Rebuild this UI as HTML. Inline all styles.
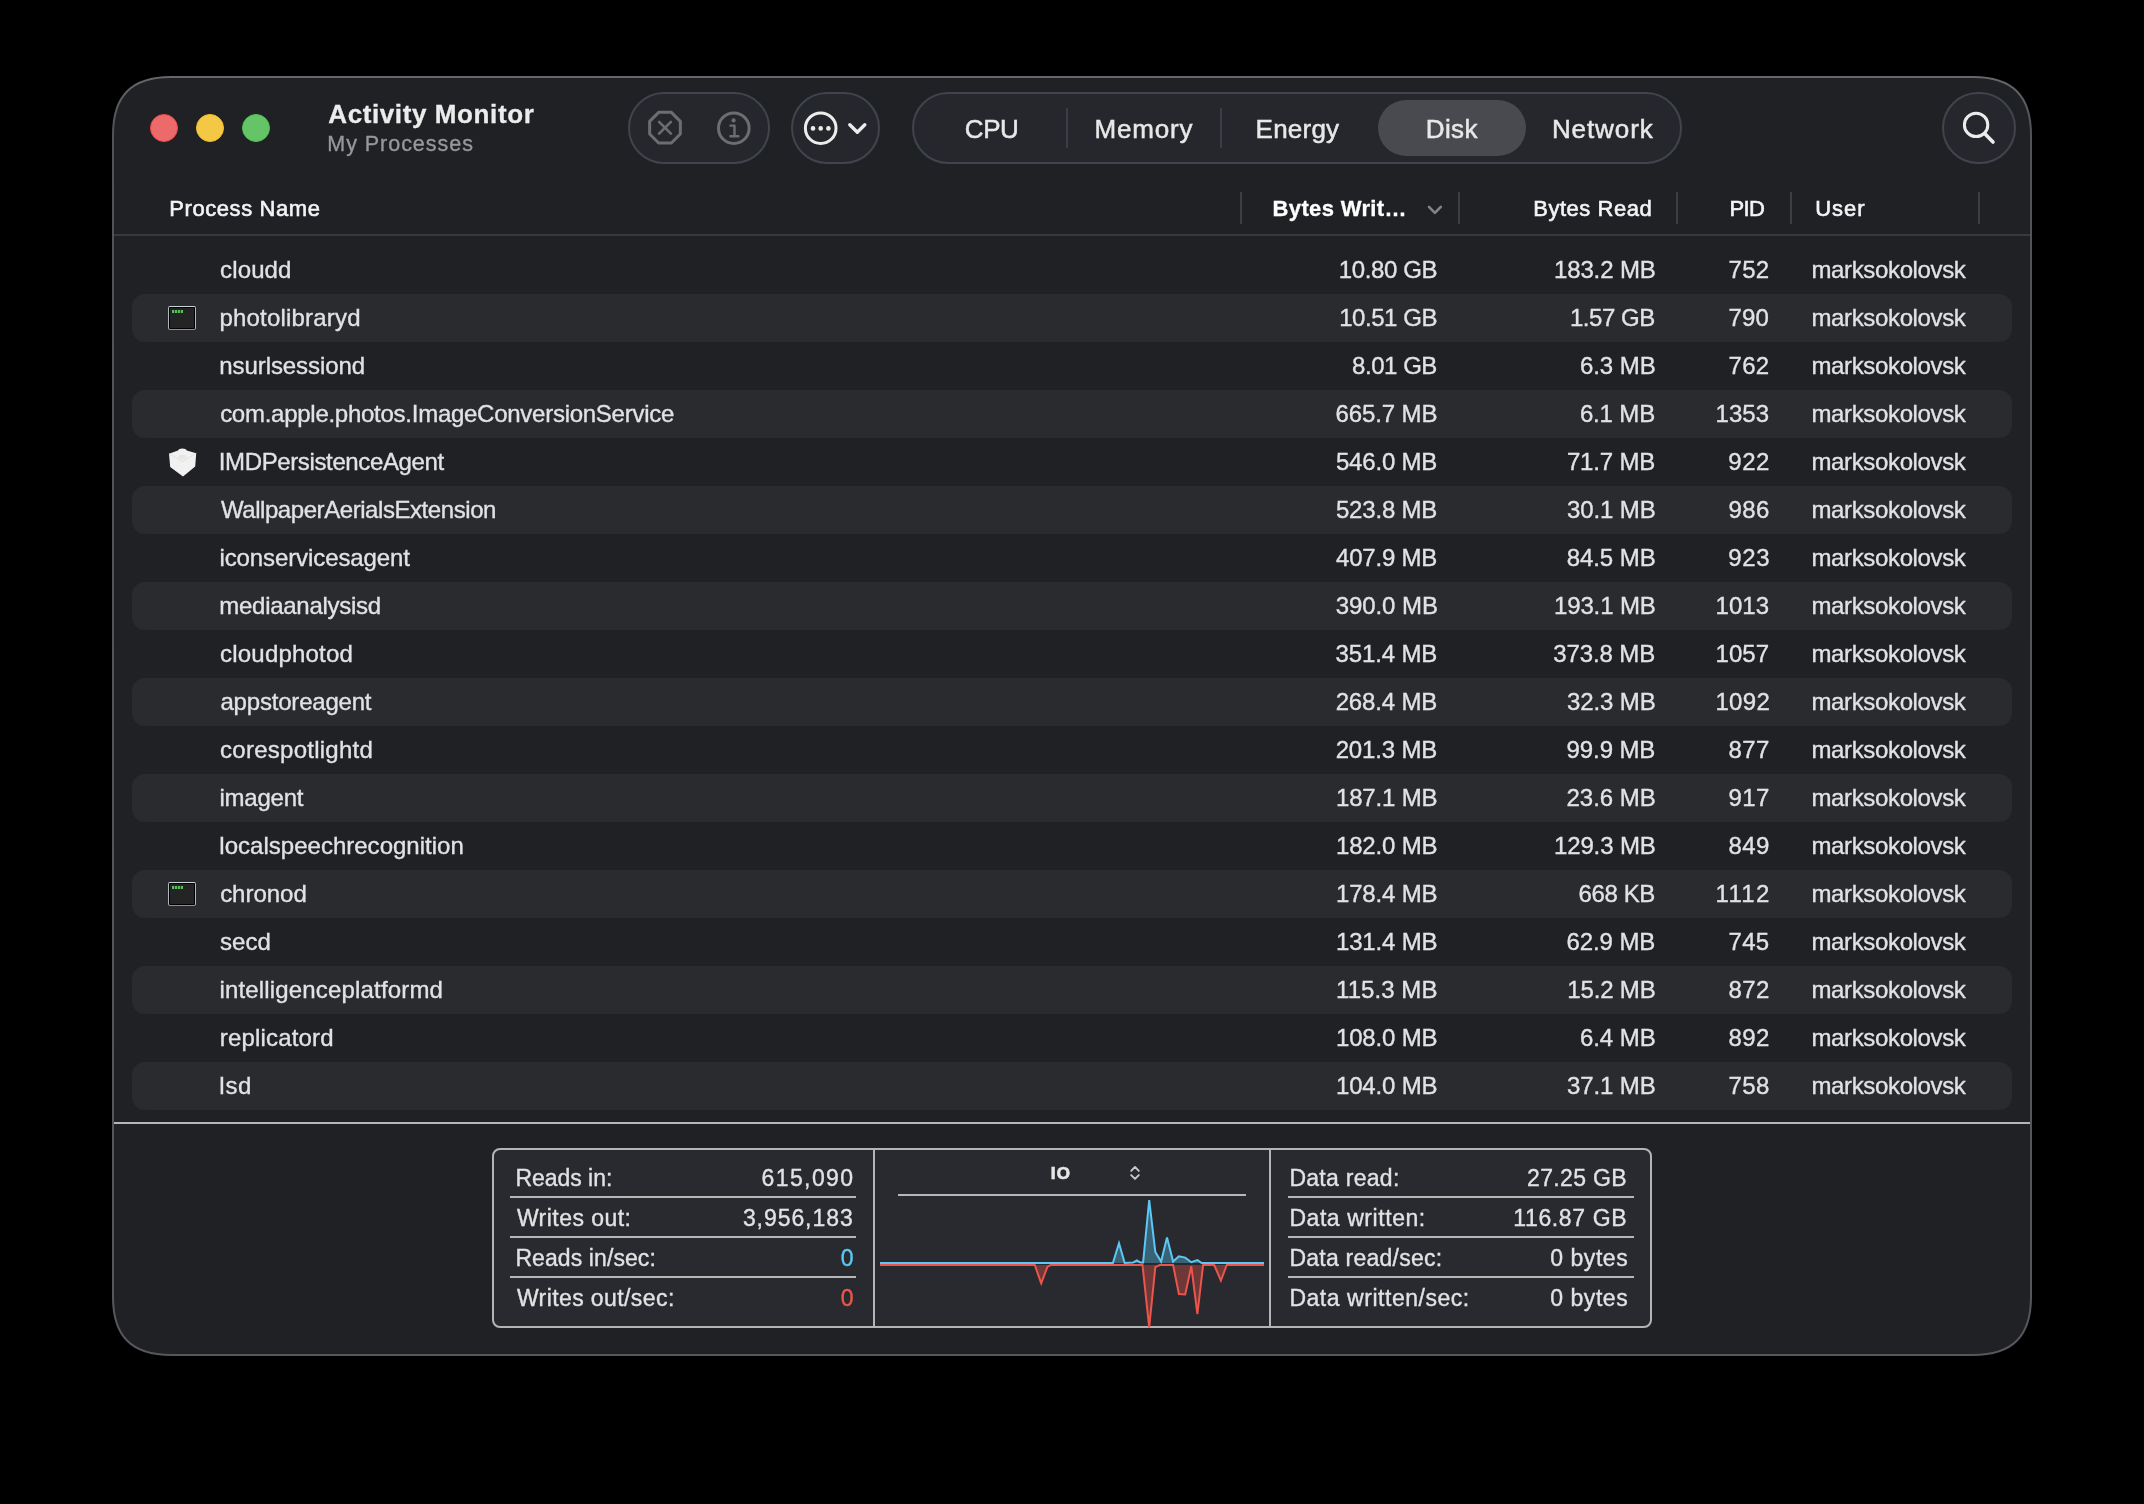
<!DOCTYPE html>
<html><head><meta charset="utf-8"><title>Activity Monitor</title>
<style>
html,body{margin:0;padding:0;background:#000;}
body{width:2144px;height:1504px;position:relative;overflow:hidden;font-family:"Liberation Sans",sans-serif;}
.abs,.t,svg{position:absolute;}
.t{white-space:pre;line-height:1;margin:0;padding:0;}
#win{left:112px;top:76px;width:1920px;height:1280px;box-sizing:border-box;border-radius:54px;background:#202125;border:2px solid #56575b;}
.alt{left:132px;width:1880px;height:48px;border-radius:13px;background:#2a2b2f;}
.pill{box-sizing:border-box;border:2px solid #40454d;background:#25272c;border-radius:36px;top:92px;height:72px;}
.vsep{width:2px;background:#3d3e42;top:192px;height:32px;}
.hl{height:2px;background:#b7b7b8;}

</style></head><body>
<svg class="abs" style="left:0;top:0" width="2144" height="1504" viewBox="0 0 2144 1504"><defs><linearGradient id="wg" gradientUnits="userSpaceOnUse" x1="0" y1="77" x2="0" y2="1355"><stop offset="0" stop-color="#66676b"/><stop offset="0.035" stop-color="#525357"/><stop offset="1" stop-color="#56575b"/></linearGradient></defs><path d="M171 77 L1973 77 C2012.44 77 2031 95.56 2031 135 L2031 1297 C2031 1336.44 2012.44 1355 1973 1355 L171 1355 C131.56 1355 113 1336.44 113 1297 L113 135 C113 95.56 131.56 77 171 77 Z" fill="#202125" stroke="url(#wg)" stroke-width="2"/></svg>
<div class="abs" style="left:150px;top:114px;width:28px;height:28px;border-radius:50%;background:#ec6a6a;box-sizing:border-box;border:1.5px solid #f0494b;"></div>
<div class="abs" style="left:196px;top:114px;width:28px;height:28px;border-radius:50%;background:#f2c845;box-sizing:border-box;border:1.5px solid #f5bf2a;"></div>
<div class="abs" style="left:242px;top:114px;width:28px;height:28px;border-radius:50%;background:#64c466;box-sizing:border-box;border:1.5px solid #4fc254;"></div>
<div class="abs pill" style="left:628px;width:142px;"></div>
<div class="abs pill" style="left:791px;width:89px;"></div>
<div class="abs pill" style="left:912px;width:770px;"></div>
<div class="abs pill" style="left:1942px;width:74px;height:72px;"></div>
<div class="abs" style="left:1378px;top:100px;width:148px;height:56px;border-radius:28px;background:#484a4f;"></div>
<div class="abs" style="left:1066px;top:108px;width:2px;height:40px;background:#3b3e44;"></div>
<div class="abs" style="left:1220px;top:108px;width:2px;height:40px;background:#3b3e44;"></div>
<svg class="abs" style="left:0;top:0" width="2144" height="1504" viewBox="0 0 2144 1504" fill="none">
<path d="M680.34 134.05 L671.35 143.04 L658.65 143.04 L649.66 134.05 L649.66 121.35 L658.65 112.36 L671.35 112.36 L680.34 121.35 Z" stroke="#6d6d71" stroke-width="3" stroke-linejoin="round"/>
<path d="M659.1 121.8 L670.9 133.6 M670.9 121.8 L659.1 133.6" stroke="#6d6d71" stroke-width="2.6" stroke-linecap="round"/>
<circle cx="733.8" cy="128.2" r="15.3" stroke="#6d6d71" stroke-width="3"/>
<circle cx="733.6" cy="120.4" r="2.1" fill="#6d6d71"/>
<path d="M730.4 125.6 L734.5 125.6 L734.5 136.3 M730.4 136.3 L738.4 136.3" stroke="#6d6d71" stroke-width="2.4" stroke-linecap="round" stroke-linejoin="round"/>
<circle cx="820.7" cy="128.2" r="15.3" stroke="#ececec" stroke-width="3"/>
<circle cx="813.0" cy="128.4" r="2.3" fill="#ececec"/>
<circle cx="820.7" cy="128.4" r="2.3" fill="#ececec"/>
<circle cx="828.4" cy="128.4" r="2.3" fill="#ececec"/>
<path d="M849.8 124.8 L857.3 132.2 L864.8 124.8" stroke="#ececec" stroke-width="3.4" stroke-linecap="round" stroke-linejoin="round"/>
<circle cx="1976.1" cy="124.9" r="11.7" stroke="#ececec" stroke-width="3"/>
<path d="M1984.6 133.6 L1993 142" stroke="#ececec" stroke-width="3.6" stroke-linecap="round"/>
<path d="M1429 206.9 L1434.9 212.8 L1440.8 206.9" stroke="#848488" stroke-width="2.6" stroke-linecap="round" stroke-linejoin="round"/>
</svg>
<div class="abs vsep" style="left:1240px;"></div>
<div class="abs vsep" style="left:1458px;"></div>
<div class="abs vsep" style="left:1676px;"></div>
<div class="abs vsep" style="left:1790px;"></div>
<div class="abs vsep" style="left:1978px;"></div>
<div class="abs" style="left:114px;top:234px;width:1916px;height:2px;background:#38393d;"></div>
<div class="abs alt" style="top:294px;"></div>
<div class="abs" style="left:168px;top:306px;width:28px;height:24px;box-sizing:border-box;border-radius:2px;border:1.5px solid;border-color:#c6d4d9 #aeb8bc #8f9091 #aeb8bc;background:#000;"><div class="abs" style="left:1px;top:1px;right:1px;bottom:1px;background:#242424;"></div><div class="abs" style="left:2.6px;top:3.4px;width:11px;height:3px;background:repeating-linear-gradient(90deg,#56c15b 0 2.1px,rgba(86,193,91,0.25) 2.1px 2.9px);"></div></div>
<div class="abs alt" style="top:390px;"></div>
<svg class="abs" style="left:160px;top:438px" width="48" height="48" viewBox="160 438 48 48"><path d="M169 453.8 L178 450.4 Q178.8 448.4 182.4 448.4 Q186 448.4 186.8 450.4 L196.2 453.2 L195.2 466.6 L183 476.4 L170.2 467 Z" fill="#f1f1f1"/><path d="M169 453.8 L182.6 461.5 L196.2 453.2" stroke="#e2e2e2" stroke-width="1" fill="none"/><ellipse cx="182.4" cy="457" rx="4.2" ry="2.2" fill="#e6e6e6"/></svg>
<div class="abs alt" style="top:486px;"></div>
<div class="abs alt" style="top:582px;"></div>
<div class="abs alt" style="top:678px;"></div>
<div class="abs alt" style="top:774px;"></div>
<div class="abs alt" style="top:870px;"></div>
<div class="abs" style="left:168px;top:882px;width:28px;height:24px;box-sizing:border-box;border-radius:2px;border:1.5px solid;border-color:#c6d4d9 #aeb8bc #8f9091 #aeb8bc;background:#000;"><div class="abs" style="left:1px;top:1px;right:1px;bottom:1px;background:#242424;"></div><div class="abs" style="left:2.6px;top:3.4px;width:11px;height:3px;background:repeating-linear-gradient(90deg,#56c15b 0 2.1px,rgba(86,193,91,0.25) 2.1px 2.9px);"></div></div>
<div class="abs alt" style="top:966px;"></div>
<div class="abs alt" style="top:1062px;"></div>
<div class="abs" style="left:114px;top:1122px;width:1916px;height:2px;background:#b6b6b7;"></div>
<div class="abs" style="left:492px;top:1148px;width:1160px;height:180px;box-sizing:border-box;border:2px solid #b4b4b5;border-radius:8px;background:#292a2f;"></div>
<div class="abs" style="left:873px;top:1149px;width:2px;height:178px;background:#b4b4b5;"></div>
<div class="abs" style="left:1269px;top:1149px;width:2px;height:178px;background:#b4b4b5;"></div>
<div class="abs hl" style="left:510px;top:1196px;width:346px;"></div>
<div class="abs hl" style="left:1288px;top:1196px;width:346px;"></div>
<div class="abs hl" style="left:510px;top:1236px;width:346px;"></div>
<div class="abs hl" style="left:1288px;top:1236px;width:346px;"></div>
<div class="abs hl" style="left:510px;top:1276px;width:346px;"></div>
<div class="abs hl" style="left:1288px;top:1276px;width:346px;"></div>
<div class="abs hl" style="left:898px;top:1194px;width:348px;"></div>
<svg class="abs" style="left:0;top:0" width="2144" height="1504" viewBox="0 0 2144 1504" fill="none">
<path d="M880.0 1265.0 L1034.8 1265.0 L1041.2 1283.4 L1047.5 1266.6 L1050.7 1265.0 L1142.5 1265.0 L1149.2 1327.4 L1155.3 1267.2 L1159.7 1265.0 L1173.1 1265.0 L1178.9 1294.0 L1185.2 1294.5 L1191.3 1266.2 L1197.4 1314.0 L1203.1 1265.0 L1214.2 1265.0 L1220.9 1280.6 L1226.7 1265.0 L1264.0 1265.0 Z" fill="#e8544a" fill-opacity="0.36"/>
<path d="M880.0 1263.0 L1112.9 1263.0 L1119.0 1243.3 L1124.7 1263.0 L1133.0 1262.6 L1136.8 1260.5 L1140.6 1262.6 L1143.1 1262.6 L1149.2 1200.2 L1155.3 1251.9 L1161.1 1261.6 L1167.0 1237.5 L1173.1 1261.6 L1178.9 1256.3 L1185.2 1257.6 L1191.3 1262.2 L1197.4 1260.1 L1201.8 1263.0 L1264.0 1263.0 Z" fill="#5ac8f5" fill-opacity="0.36"/>
<path d="M880.0 1265.0 L1034.8 1265.0 L1041.2 1283.4 L1047.5 1266.6 L1050.7 1265.0 L1142.5 1265.0 L1149.2 1327.4 L1155.3 1267.2 L1159.7 1265.0 L1173.1 1265.0 L1178.9 1294.0 L1185.2 1294.5 L1191.3 1266.2 L1197.4 1314.0 L1203.1 1265.0 L1214.2 1265.0 L1220.9 1280.6 L1226.7 1265.0 L1264.0 1265.0" stroke="#eb554b" stroke-width="2" stroke-linejoin="miter"/>
<path d="M880.0 1263.0 L1112.9 1263.0 L1119.0 1243.3 L1124.7 1263.0 L1133.0 1262.6 L1136.8 1260.5 L1140.6 1262.6 L1143.1 1262.6 L1149.2 1200.2 L1155.3 1251.9 L1161.1 1261.6 L1167.0 1237.5 L1173.1 1261.6 L1178.9 1256.3 L1185.2 1257.6 L1191.3 1262.2 L1197.4 1260.1 L1201.8 1263.0 L1264.0 1263.0" stroke="#5cc8f5" stroke-width="2" stroke-linejoin="miter"/>
<path d="M1131.2 1170.9 L1135 1166.9 L1138.8 1170.9 M1131.2 1175.1 L1135 1178.9 L1138.8 1175.1" stroke="#c8c8ca" stroke-width="1.9" stroke-linecap="round" stroke-linejoin="round"/>
</svg>
<div id="txt" style="position:absolute;left:0;top:0;width:2144px;height:1504px;will-change:transform;">
<div class="t" id="title" style="font-size:26px;top:101.19px;color:#ececec;font-weight:bold;letter-spacing:0.603px;-webkit-text-stroke:0.3px #ececec;left:328.29px;">Activity Monitor</div>
<div class="t" id="sub" style="font-size:21.5px;top:133.50px;color:#98989b;letter-spacing:0.964px;-webkit-text-stroke:0.35px #98989b;left:327.29px;">My Processes</div>
<div class="t" id="tab0" style="font-size:26px;top:116.09px;color:#e8e8e8;letter-spacing:-0.432px;-webkit-text-stroke:0.5px #e8e8e8;left:964.83px;">CPU</div>
<div class="t" id="tab1" style="font-size:26px;top:116.09px;color:#e8e8e8;letter-spacing:0.824px;-webkit-text-stroke:0.5px #e8e8e8;left:1094.42px;">Memory</div>
<div class="t" id="tab2" style="font-size:26px;top:116.09px;color:#e8e8e8;letter-spacing:0.226px;-webkit-text-stroke:0.5px #e8e8e8;left:1255.61px;">Energy</div>
<div class="t" id="tab3" style="font-size:26px;top:116.09px;color:#e8e8e8;letter-spacing:0.376px;-webkit-text-stroke:0.5px #e8e8e8;left:1425.75px;">Disk</div>
<div class="t" id="tab4" style="font-size:26px;top:116.09px;color:#e8e8e8;letter-spacing:0.904px;-webkit-text-stroke:0.5px #e8e8e8;left:1551.94px;">Network</div>
<div class="t" id="h0" style="font-size:22px;top:197.58px;color:#f4f4f4;letter-spacing:0.576px;-webkit-text-stroke:0.6px #f4f4f4;left:169.28px;">Process Name</div>
<div class="t" id="h1" style="font-size:22px;top:197.58px;color:#ffffff;font-weight:bold;letter-spacing:0.352px;-webkit-text-stroke:0.3px #ffffff;left:1272.59px;">Bytes Writ…</div>
<div class="t" id="h2" style="font-size:22px;top:197.58px;color:#f4f4f4;letter-spacing:0.527px;-webkit-text-stroke:0.6px #f4f4f4;left:1533.23px;">Bytes Read</div>
<div class="t" id="h3" style="font-size:22px;top:197.58px;color:#f4f4f4;letter-spacing:-0.615px;-webkit-text-stroke:0.6px #f4f4f4;left:1729.40px;">PID</div>
<div class="t" id="h4" style="font-size:22px;top:197.58px;color:#f4f4f4;letter-spacing:0.892px;-webkit-text-stroke:0.6px #f4f4f4;left:1815.34px;">User</div>
<div class="t" id="r0n" style="font-size:24px;top:257.68px;color:#e2e2e4;letter-spacing:0.119px;-webkit-text-stroke:0.35px #e2e2e4;left:220.12px;">cloudd</div>
<div class="t" id="r0w" style="font-size:24px;top:257.68px;color:#e2e2e4;letter-spacing:-0.382px;-webkit-text-stroke:0.35px #e2e2e4;left:1338.75px;">10.80 GB</div>
<div class="t" id="r0r" style="font-size:24px;top:257.68px;color:#e2e2e4;letter-spacing:-0.135px;-webkit-text-stroke:0.35px #e2e2e4;left:1553.97px;">183.2 MB</div>
<div class="t" id="r0p" style="font-size:24px;top:257.68px;color:#e2e2e4;letter-spacing:0.276px;-webkit-text-stroke:0.35px #e2e2e4;left:1728.54px;">752</div>
<div class="t" id="r0u" style="font-size:24px;top:257.68px;color:#e2e2e4;letter-spacing:-0.361px;-webkit-text-stroke:0.35px #e2e2e4;left:1811.49px;">marksokolovsk</div>
<div class="t" id="r1n" style="font-size:24px;top:305.68px;color:#e2e2e4;letter-spacing:0.187px;-webkit-text-stroke:0.35px #e2e2e4;left:219.50px;">photolibraryd</div>
<div class="t" id="r1w" style="font-size:24px;top:305.68px;color:#e2e2e4;letter-spacing:-0.452px;-webkit-text-stroke:0.35px #e2e2e4;left:1339.19px;">10.51 GB</div>
<div class="t" id="r1r" style="font-size:24px;top:305.68px;color:#e2e2e4;letter-spacing:-0.451px;-webkit-text-stroke:0.35px #e2e2e4;left:1569.97px;">1.57 GB</div>
<div class="t" id="r1p" style="font-size:24px;top:305.68px;color:#e2e2e4;letter-spacing:0.181px;-webkit-text-stroke:0.35px #e2e2e4;left:1728.54px;">790</div>
<div class="t" id="r1u" style="font-size:24px;top:305.68px;color:#e2e2e4;letter-spacing:-0.361px;-webkit-text-stroke:0.35px #e2e2e4;left:1811.49px;">marksokolovsk</div>
<div class="t" id="r2n" style="font-size:24px;top:353.68px;color:#e2e2e4;letter-spacing:-0.088px;-webkit-text-stroke:0.35px #e2e2e4;left:219.36px;">nsurlsessiond</div>
<div class="t" id="r2w" style="font-size:24px;top:353.68px;color:#e2e2e4;letter-spacing:-0.449px;-webkit-text-stroke:0.35px #e2e2e4;left:1352.03px;">8.01 GB</div>
<div class="t" id="r2r" style="font-size:24px;top:353.68px;color:#e2e2e4;letter-spacing:-0.028px;-webkit-text-stroke:0.35px #e2e2e4;left:1579.88px;">6.3 MB</div>
<div class="t" id="r2p" style="font-size:24px;top:353.68px;color:#e2e2e4;letter-spacing:0.276px;-webkit-text-stroke:0.35px #e2e2e4;left:1728.54px;">762</div>
<div class="t" id="r2u" style="font-size:24px;top:353.68px;color:#e2e2e4;letter-spacing:-0.361px;-webkit-text-stroke:0.35px #e2e2e4;left:1811.49px;">marksokolovsk</div>
<div class="t" id="r3n" style="font-size:24px;top:401.68px;color:#e2e2e4;letter-spacing:-0.265px;-webkit-text-stroke:0.35px #e2e2e4;left:220.13px;">com.apple.photos.ImageConversionService</div>
<div class="t" id="r3w" style="font-size:24px;top:401.68px;color:#e2e2e4;letter-spacing:-0.095px;-webkit-text-stroke:0.35px #e2e2e4;left:1335.38px;">665.7 MB</div>
<div class="t" id="r3r" style="font-size:24px;top:401.68px;color:#e2e2e4;letter-spacing:-0.150px;-webkit-text-stroke:0.35px #e2e2e4;left:1579.88px;">6.1 MB</div>
<div class="t" id="r3p" style="font-size:24px;top:401.68px;color:#e2e2e4;letter-spacing:0.062px;-webkit-text-stroke:0.35px #e2e2e4;left:1715.48px;">1353</div>
<div class="t" id="r3u" style="font-size:24px;top:401.68px;color:#e2e2e4;letter-spacing:-0.361px;-webkit-text-stroke:0.35px #e2e2e4;left:1811.49px;">marksokolovsk</div>
<div class="t" id="r4n" style="font-size:24px;top:449.68px;color:#e2e2e4;letter-spacing:-0.372px;-webkit-text-stroke:0.35px #e2e2e4;left:218.77px;">IMDPersistenceAgent</div>
<div class="t" id="r4w" style="font-size:24px;top:449.68px;color:#e2e2e4;letter-spacing:-0.191px;-webkit-text-stroke:0.35px #e2e2e4;left:1335.96px;">546.0 MB</div>
<div class="t" id="r4r" style="font-size:24px;top:449.68px;color:#e2e2e4;letter-spacing:-0.156px;-webkit-text-stroke:0.35px #e2e2e4;left:1566.89px;">71.7 MB</div>
<div class="t" id="r4p" style="font-size:24px;top:449.68px;color:#e2e2e4;letter-spacing:0.496px;-webkit-text-stroke:0.35px #e2e2e4;left:1728.31px;">922</div>
<div class="t" id="r4u" style="font-size:24px;top:449.68px;color:#e2e2e4;letter-spacing:-0.361px;-webkit-text-stroke:0.35px #e2e2e4;left:1811.49px;">marksokolovsk</div>
<div class="t" id="r5n" style="font-size:24px;top:497.68px;color:#e2e2e4;letter-spacing:-0.435px;-webkit-text-stroke:0.35px #e2e2e4;left:220.93px;">WallpaperAerialsExtension</div>
<div class="t" id="r5w" style="font-size:24px;top:497.68px;color:#e2e2e4;letter-spacing:-0.189px;-webkit-text-stroke:0.35px #e2e2e4;left:1335.96px;">523.8 MB</div>
<div class="t" id="r5r" style="font-size:24px;top:497.68px;color:#e2e2e4;letter-spacing:-0.098px;-webkit-text-stroke:0.35px #e2e2e4;left:1566.97px;">30.1 MB</div>
<div class="t" id="r5p" style="font-size:24px;top:497.68px;color:#e2e2e4;letter-spacing:0.441px;-webkit-text-stroke:0.35px #e2e2e4;left:1728.39px;">986</div>
<div class="t" id="r5u" style="font-size:24px;top:497.68px;color:#e2e2e4;letter-spacing:-0.361px;-webkit-text-stroke:0.35px #e2e2e4;left:1811.49px;">marksokolovsk</div>
<div class="t" id="r6n" style="font-size:24px;top:545.68px;color:#e2e2e4;letter-spacing:-0.097px;-webkit-text-stroke:0.35px #e2e2e4;left:219.41px;">iconservicesagent</div>
<div class="t" id="r6w" style="font-size:24px;top:545.68px;color:#e2e2e4;letter-spacing:-0.199px;-webkit-text-stroke:0.35px #e2e2e4;left:1336.05px;">407.9 MB</div>
<div class="t" id="r6r" style="font-size:24px;top:545.68px;color:#e2e2e4;letter-spacing:-0.044px;-webkit-text-stroke:0.35px #e2e2e4;left:1566.64px;">84.5 MB</div>
<div class="t" id="r6p" style="font-size:24px;top:545.68px;color:#e2e2e4;letter-spacing:0.662px;-webkit-text-stroke:0.35px #e2e2e4;left:1728.31px;">923</div>
<div class="t" id="r6u" style="font-size:24px;top:545.68px;color:#e2e2e4;letter-spacing:-0.361px;-webkit-text-stroke:0.35px #e2e2e4;left:1811.49px;">marksokolovsk</div>
<div class="t" id="r7n" style="font-size:24px;top:593.68px;color:#e2e2e4;letter-spacing:-0.289px;-webkit-text-stroke:0.35px #e2e2e4;left:219.36px;">mediaanalysisd</div>
<div class="t" id="r7w" style="font-size:24px;top:593.68px;color:#e2e2e4;letter-spacing:-0.056px;-webkit-text-stroke:0.35px #e2e2e4;left:1335.63px;">390.0 MB</div>
<div class="t" id="r7r" style="font-size:24px;top:593.68px;color:#e2e2e4;letter-spacing:-0.132px;-webkit-text-stroke:0.35px #e2e2e4;left:1553.97px;">193.1 MB</div>
<div class="t" id="r7p" style="font-size:24px;top:593.68px;color:#e2e2e4;letter-spacing:0.062px;-webkit-text-stroke:0.35px #e2e2e4;left:1715.48px;">1013</div>
<div class="t" id="r7u" style="font-size:24px;top:593.68px;color:#e2e2e4;letter-spacing:-0.361px;-webkit-text-stroke:0.35px #e2e2e4;left:1811.49px;">marksokolovsk</div>
<div class="t" id="r8n" style="font-size:24px;top:641.68px;color:#e2e2e4;letter-spacing:0.190px;-webkit-text-stroke:0.35px #e2e2e4;left:220.12px;">cloudphotod</div>
<div class="t" id="r8w" style="font-size:24px;top:641.68px;color:#e2e2e4;letter-spacing:-0.139px;-webkit-text-stroke:0.35px #e2e2e4;left:1335.60px;">351.4 MB</div>
<div class="t" id="r8r" style="font-size:24px;top:641.68px;color:#e2e2e4;letter-spacing:-0.133px;-webkit-text-stroke:0.35px #e2e2e4;left:1553.35px;">373.8 MB</div>
<div class="t" id="r8p" style="font-size:24px;top:641.68px;color:#e2e2e4;letter-spacing:0.099px;-webkit-text-stroke:0.35px #e2e2e4;left:1715.48px;">1057</div>
<div class="t" id="r8u" style="font-size:24px;top:641.68px;color:#e2e2e4;letter-spacing:-0.361px;-webkit-text-stroke:0.35px #e2e2e4;left:1811.49px;">marksokolovsk</div>
<div class="t" id="r9n" style="font-size:24px;top:689.68px;color:#e2e2e4;letter-spacing:-0.199px;-webkit-text-stroke:0.35px #e2e2e4;left:220.48px;">appstoreagent</div>
<div class="t" id="r9w" style="font-size:24px;top:689.68px;color:#e2e2e4;letter-spacing:-0.144px;-webkit-text-stroke:0.35px #e2e2e4;left:1335.64px;">268.4 MB</div>
<div class="t" id="r9r" style="font-size:24px;top:689.68px;color:#e2e2e4;letter-spacing:-0.098px;-webkit-text-stroke:0.35px #e2e2e4;left:1566.97px;">32.3 MB</div>
<div class="t" id="r9p" style="font-size:24px;top:689.68px;color:#e2e2e4;letter-spacing:0.289px;-webkit-text-stroke:0.35px #e2e2e4;left:1715.48px;">1092</div>
<div class="t" id="r9u" style="font-size:24px;top:689.68px;color:#e2e2e4;letter-spacing:-0.361px;-webkit-text-stroke:0.35px #e2e2e4;left:1811.49px;">marksokolovsk</div>
<div class="t" id="r10n" style="font-size:24px;top:737.68px;color:#e2e2e4;letter-spacing:0.250px;-webkit-text-stroke:0.35px #e2e2e4;left:220.12px;">corespotlightd</div>
<div class="t" id="r10w" style="font-size:24px;top:737.68px;color:#e2e2e4;letter-spacing:-0.143px;-webkit-text-stroke:0.35px #e2e2e4;left:1335.64px;">201.3 MB</div>
<div class="t" id="r10r" style="font-size:24px;top:737.68px;color:#e2e2e4;letter-spacing:-0.110px;-webkit-text-stroke:0.35px #e2e2e4;left:1566.61px;">99.9 MB</div>
<div class="t" id="r10p" style="font-size:24px;top:737.68px;color:#e2e2e4;letter-spacing:0.406px;-webkit-text-stroke:0.35px #e2e2e4;left:1728.38px;">877</div>
<div class="t" id="r10u" style="font-size:24px;top:737.68px;color:#e2e2e4;letter-spacing:-0.361px;-webkit-text-stroke:0.35px #e2e2e4;left:1811.49px;">marksokolovsk</div>
<div class="t" id="r11n" style="font-size:24px;top:785.68px;color:#e2e2e4;letter-spacing:-0.208px;-webkit-text-stroke:0.35px #e2e2e4;left:219.41px;">imagent</div>
<div class="t" id="r11w" style="font-size:24px;top:785.68px;color:#e2e2e4;letter-spacing:-0.185px;-webkit-text-stroke:0.35px #e2e2e4;left:1336.03px;">187.1 MB</div>
<div class="t" id="r11r" style="font-size:24px;top:785.68px;color:#e2e2e4;letter-spacing:-0.027px;-webkit-text-stroke:0.35px #e2e2e4;left:1566.55px;">23.6 MB</div>
<div class="t" id="r11p" style="font-size:24px;top:785.68px;color:#e2e2e4;letter-spacing:0.458px;-webkit-text-stroke:0.35px #e2e2e4;left:1728.39px;">917</div>
<div class="t" id="r11u" style="font-size:24px;top:785.68px;color:#e2e2e4;letter-spacing:-0.361px;-webkit-text-stroke:0.35px #e2e2e4;left:1811.49px;">marksokolovsk</div>
<div class="t" id="r12n" style="font-size:24px;top:833.68px;color:#e2e2e4;letter-spacing:0.013px;-webkit-text-stroke:0.35px #e2e2e4;left:219.36px;">localspeechrecognition</div>
<div class="t" id="r12w" style="font-size:24px;top:833.68px;color:#e2e2e4;letter-spacing:-0.188px;-webkit-text-stroke:0.35px #e2e2e4;left:1336.05px;">182.0 MB</div>
<div class="t" id="r12r" style="font-size:24px;top:833.68px;color:#e2e2e4;letter-spacing:-0.135px;-webkit-text-stroke:0.35px #e2e2e4;left:1553.97px;">129.3 MB</div>
<div class="t" id="r12p" style="font-size:24px;top:833.68px;color:#e2e2e4;letter-spacing:0.487px;-webkit-text-stroke:0.35px #e2e2e4;left:1728.38px;">849</div>
<div class="t" id="r12u" style="font-size:24px;top:833.68px;color:#e2e2e4;letter-spacing:-0.361px;-webkit-text-stroke:0.35px #e2e2e4;left:1811.49px;">marksokolovsk</div>
<div class="t" id="r13n" style="font-size:24px;top:881.68px;color:#e2e2e4;letter-spacing:-0.020px;-webkit-text-stroke:0.35px #e2e2e4;left:220.13px;">chronod</div>
<div class="t" id="r13w" style="font-size:24px;top:881.68px;color:#e2e2e4;letter-spacing:-0.185px;-webkit-text-stroke:0.35px #e2e2e4;left:1336.03px;">178.4 MB</div>
<div class="t" id="r13r" style="font-size:24px;top:881.68px;color:#e2e2e4;letter-spacing:-0.373px;-webkit-text-stroke:0.35px #e2e2e4;left:1578.50px;">668 KB</div>
<div class="t" id="r13p" style="font-size:24px;top:881.68px;color:#e2e2e4;letter-spacing:1.365px;-webkit-text-stroke:0.35px #e2e2e4;left:1715.48px;">1112</div>
<div class="t" id="r13u" style="font-size:24px;top:881.68px;color:#e2e2e4;letter-spacing:-0.361px;-webkit-text-stroke:0.35px #e2e2e4;left:1811.49px;">marksokolovsk</div>
<div class="t" id="r14n" style="font-size:24px;top:929.68px;color:#e2e2e4;letter-spacing:-0.017px;-webkit-text-stroke:0.35px #e2e2e4;left:220.11px;">secd</div>
<div class="t" id="r14w" style="font-size:24px;top:929.68px;color:#e2e2e4;letter-spacing:-0.188px;-webkit-text-stroke:0.35px #e2e2e4;left:1336.05px;">131.4 MB</div>
<div class="t" id="r14r" style="font-size:24px;top:929.68px;color:#e2e2e4;letter-spacing:-0.108px;-webkit-text-stroke:0.35px #e2e2e4;left:1566.58px;">62.9 MB</div>
<div class="t" id="r14p" style="font-size:24px;top:929.68px;color:#e2e2e4;letter-spacing:0.267px;-webkit-text-stroke:0.35px #e2e2e4;left:1728.54px;">745</div>
<div class="t" id="r14u" style="font-size:24px;top:929.68px;color:#e2e2e4;letter-spacing:-0.361px;-webkit-text-stroke:0.35px #e2e2e4;left:1811.49px;">marksokolovsk</div>
<div class="t" id="r15n" style="font-size:24px;top:977.68px;color:#e2e2e4;letter-spacing:0.169px;-webkit-text-stroke:0.35px #e2e2e4;left:219.41px;">intelligenceplatformd</div>
<div class="t" id="r15w" style="font-size:24px;top:977.68px;color:#e2e2e4;letter-spacing:0.068px;-webkit-text-stroke:0.35px #e2e2e4;left:1336.03px;">115.3 MB</div>
<div class="t" id="r15r" style="font-size:24px;top:977.68px;color:#e2e2e4;letter-spacing:-0.156px;-webkit-text-stroke:0.35px #e2e2e4;left:1567.28px;">15.2 MB</div>
<div class="t" id="r15p" style="font-size:24px;top:977.68px;color:#e2e2e4;letter-spacing:0.448px;-webkit-text-stroke:0.35px #e2e2e4;left:1728.38px;">872</div>
<div class="t" id="r15u" style="font-size:24px;top:977.68px;color:#e2e2e4;letter-spacing:-0.361px;-webkit-text-stroke:0.35px #e2e2e4;left:1811.49px;">marksokolovsk</div>
<div class="t" id="r16n" style="font-size:24px;top:1025.68px;color:#e2e2e4;letter-spacing:0.183px;-webkit-text-stroke:0.35px #e2e2e4;left:219.71px;">replicatord</div>
<div class="t" id="r16w" style="font-size:24px;top:1025.68px;color:#e2e2e4;letter-spacing:-0.188px;-webkit-text-stroke:0.35px #e2e2e4;left:1336.05px;">108.0 MB</div>
<div class="t" id="r16r" style="font-size:24px;top:1025.68px;color:#e2e2e4;letter-spacing:-0.028px;-webkit-text-stroke:0.35px #e2e2e4;left:1579.88px;">6.4 MB</div>
<div class="t" id="r16p" style="font-size:24px;top:1025.68px;color:#e2e2e4;letter-spacing:0.406px;-webkit-text-stroke:0.35px #e2e2e4;left:1728.38px;">892</div>
<div class="t" id="r16u" style="font-size:24px;top:1025.68px;color:#e2e2e4;letter-spacing:-0.361px;-webkit-text-stroke:0.35px #e2e2e4;left:1811.49px;">marksokolovsk</div>
<div class="t" id="r17n" style="font-size:24px;top:1073.68px;color:#e2e2e4;letter-spacing:0.695px;-webkit-text-stroke:0.35px #e2e2e4;left:219.36px;">lsd</div>
<div class="t" id="r17w" style="font-size:24px;top:1073.68px;color:#e2e2e4;letter-spacing:-0.185px;-webkit-text-stroke:0.35px #e2e2e4;left:1336.03px;">104.0 MB</div>
<div class="t" id="r17r" style="font-size:24px;top:1073.68px;color:#e2e2e4;letter-spacing:-0.098px;-webkit-text-stroke:0.35px #e2e2e4;left:1566.97px;">37.1 MB</div>
<div class="t" id="r17p" style="font-size:24px;top:1073.68px;color:#e2e2e4;letter-spacing:0.426px;-webkit-text-stroke:0.35px #e2e2e4;left:1728.54px;">758</div>
<div class="t" id="r17u" style="font-size:24px;top:1073.68px;color:#e2e2e4;letter-spacing:-0.361px;-webkit-text-stroke:0.35px #e2e2e4;left:1811.49px;">marksokolovsk</div>
<div class="t" id="pl0" style="font-size:23px;top:1166.83px;color:#e2e2e4;letter-spacing:-0.032px;-webkit-text-stroke:0.35px #e2e2e4;left:515.38px;">Reads in:</div>
<div class="t" id="pv0" style="font-size:23px;top:1166.83px;color:#e2e2e4;letter-spacing:1.399px;-webkit-text-stroke:0.35px #e2e2e4;left:761.54px;">615,090</div>
<div class="t" id="pl1" style="font-size:23px;top:1206.83px;color:#e2e2e4;letter-spacing:0.454px;-webkit-text-stroke:0.35px #e2e2e4;left:516.89px;">Writes out:</div>
<div class="t" id="pv1" style="font-size:23px;top:1206.83px;color:#e2e2e4;letter-spacing:0.935px;-webkit-text-stroke:0.35px #e2e2e4;left:742.89px;">3,956,183</div>
<div class="t" id="pl2" style="font-size:23px;top:1246.83px;color:#e2e2e4;letter-spacing:0.093px;-webkit-text-stroke:0.35px #e2e2e4;left:515.38px;">Reads in/sec:</div>
<div class="t" id="pv2" style="font-size:23px;top:1246.83px;color:#5ac8f5;-webkit-text-stroke:0.35px #5ac8f5;left:840.72px;">0</div>
<div class="t" id="pl3" style="font-size:23px;top:1286.83px;color:#e2e2e4;letter-spacing:0.409px;-webkit-text-stroke:0.35px #e2e2e4;left:516.89px;">Writes out/sec:</div>
<div class="t" id="pv3" style="font-size:23px;top:1286.83px;color:#f0564a;-webkit-text-stroke:0.35px #f0564a;left:840.67px;">0</div>
<div class="t" id="ql0" style="font-size:23px;top:1166.83px;color:#e2e2e4;letter-spacing:0.282px;-webkit-text-stroke:0.35px #e2e2e4;left:1289.38px;">Data read:</div>
<div class="t" id="qv0" style="font-size:23px;top:1166.83px;color:#e2e2e4;letter-spacing:0.316px;-webkit-text-stroke:0.35px #e2e2e4;left:1527.11px;">27.25 GB</div>
<div class="t" id="ql1" style="font-size:23px;top:1206.83px;color:#e2e2e4;letter-spacing:0.564px;-webkit-text-stroke:0.35px #e2e2e4;left:1289.38px;">Data written:</div>
<div class="t" id="qv1" style="font-size:23px;top:1206.83px;color:#e2e2e4;letter-spacing:0.610px;-webkit-text-stroke:0.35px #e2e2e4;left:1513.33px;">116.87 GB</div>
<div class="t" id="ql2" style="font-size:23px;top:1246.83px;color:#e2e2e4;letter-spacing:0.239px;-webkit-text-stroke:0.35px #e2e2e4;left:1289.38px;">Data read/sec:</div>
<div class="t" id="qv2" style="font-size:23px;top:1246.83px;color:#e2e2e4;letter-spacing:0.544px;-webkit-text-stroke:0.35px #e2e2e4;left:1550.26px;">0 bytes</div>
<div class="t" id="ql3" style="font-size:23px;top:1286.83px;color:#e2e2e4;letter-spacing:0.537px;-webkit-text-stroke:0.35px #e2e2e4;left:1289.38px;">Data written/sec:</div>
<div class="t" id="qv3" style="font-size:23px;top:1286.83px;color:#e2e2e4;letter-spacing:0.544px;-webkit-text-stroke:0.35px #e2e2e4;left:1550.26px;">0 bytes</div>
<div class="t" id="io" style="font-size:17px;top:1164.81px;color:#e6e6e6;font-weight:bold;letter-spacing:1.064px;-webkit-text-stroke:0.7px #e6e6e6;left:1050.85px;">IO</div>
</div>
</body></html>
